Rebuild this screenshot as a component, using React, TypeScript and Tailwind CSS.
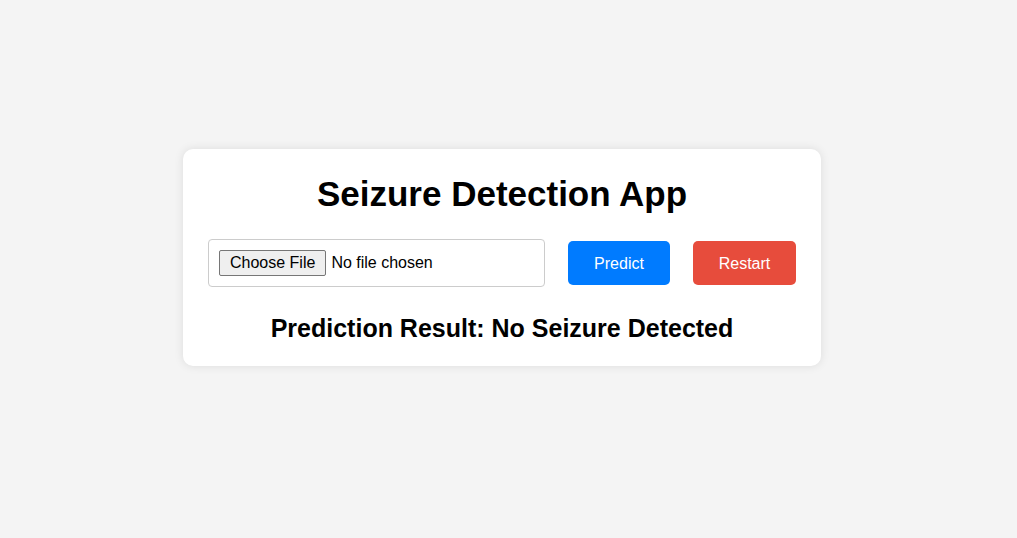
import React, { FC } from "react";

const App: FC = () => {
  return (
    <div className="min-h-screen bg-[#f4f4f4] pt-[149px] pl-[183px] font-['Liberation_Sans',Arial,sans-serif] text-black">
      <div className="w-[638px] rounded-[10px] bg-white px-[25px] pt-[25px] pb-[23px] shadow-[0_0_10px_rgba(0,0,0,0.1)]">
        <h1 className="text-center text-[35px] leading-[40px] font-bold">Seizure Detection App</h1>

        <div className="mt-[25px] flex items-center justify-between">
          <input
            type="file"
            className="h-[48px] w-[337px] rounded-[4px] border border-[#ccc] p-[10px] text-[16px] leading-[24px] file:mr-[5px] file:h-[26px] file:rounded-[2px] file:border file:border-[#767676] file:bg-[#efefef] file:px-[10px] file:text-[16px] file:text-black"
          />
          <div className="flex items-center gap-[23px]">
            <button className="h-[44px] w-[102px] rounded-[5px] bg-[#007bff] pt-[1px] text-[16px] text-white">Predict</button>
            <button className="h-[44px] w-[103px] rounded-[5px] bg-[#e74c3c] pt-[1px] text-[16px] text-white">Restart</button>
          </div>
        </div>

        <h2 className="mt-[26px] text-center text-[25px] leading-[30px] font-bold">
          Prediction Result: No Seizure Detected
        </h2>
      </div>
    </div>
  );
};

export default App;
